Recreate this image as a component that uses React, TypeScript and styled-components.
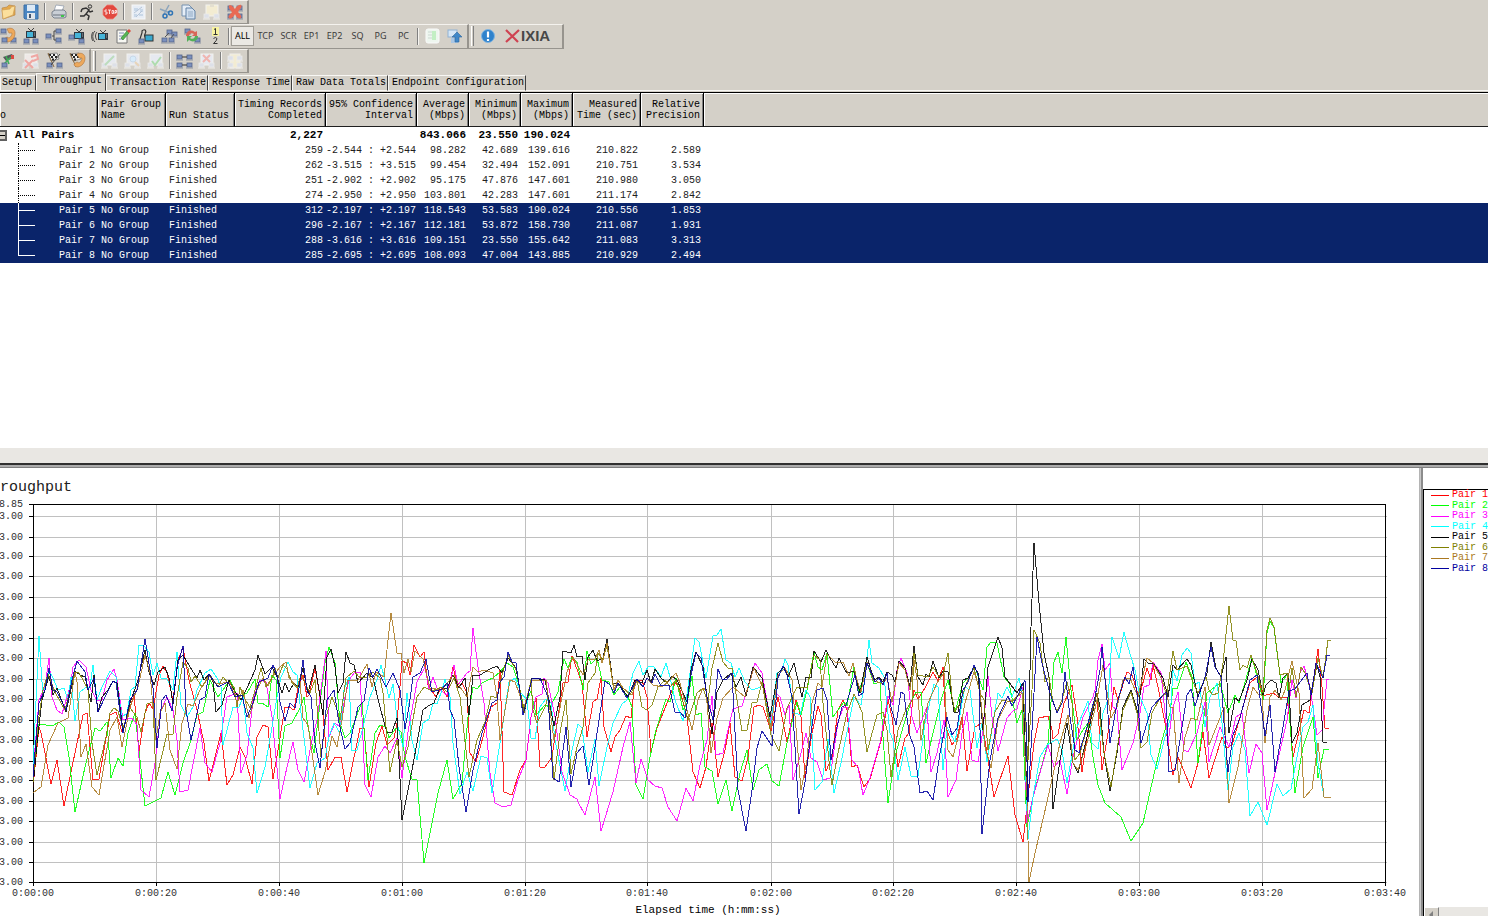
import React from "react";
import styled, { createGlobalStyle } from "styled-components";

const face = "#d4d0c8";
const shade = "#808080";
const navy = "#0a246a";
const mono = '"Liberation Mono", "DejaVu Sans Mono", monospace';

const GlobalStyle = createGlobalStyle`
  *, *::before, *::after { box-sizing: border-box; }
  body { margin: 0; background: ${face}; font-family: ${mono}; font-size: 10px; color: #000; overflow: hidden; }
  button { font: inherit; color: inherit; margin: 0; padding: 0; border: 0; background: none; }
`;

const Shell = styled.div`
  display: flex;
  flex-direction: column;
  min-height: 100vh;
  overflow: hidden;
`;

const ToolRow = styled.div<{ $h: number }>`
  display: flex;
  height: ${(p) => p.$h}px;
`;

const ToolPanel = styled.div<{ $first?: boolean }>`
  display: flex;
  align-items: center;
  padding-right: 1px;
  padding-bottom: 1px;
  margin-left: ${(p) => (p.$first ? "-4px" : "0")};
  border-top: 1px solid #f4f2ee;
  border-right: 2px solid #97948e;
  border-bottom: 1px solid #97948e;
`;

const ToolButton = styled.button`
  display: flex;
  align-items: center;
  justify-content: center;
  flex: none;
  width: 23px;
  height: 20px;
`;

const FilterButton = styled.button<{ $on?: boolean }>`
  flex: none;
  width: 23px;
  height: 20px;
  font: 9px/18px "Noto Sans", sans-serif;
  color: ${(p) => (p.$on ? "#000" : "#3c3c3c")};
  background: ${(p) => (p.$on ? "#ebe9e4" : "transparent")};
  border: 1px solid ${(p) => (p.$on ? "#a09d96" : "transparent")};
`;

const Divider = styled.span`
  flex: none;
  width: 2px;
  height: 17px;
  margin: 0 1px 0 2px;
  border-left: 1px solid ${shade};
  border-right: 1px solid #f6f4f0;
`;

const Grip = styled.span`
  flex: none;
  width: 3px;
  height: 20px;
  margin: 0 2px;
  border-left: 1px solid #fff;
  border-right: 1px solid ${shade};
`;

const Brand = styled.a`
  display: flex;
  align-items: center;
  gap: 1px;
  width: 62px;
  padding-left: 6px;
  font: bold 15px/18px "Liberation Sans", sans-serif;
  color: #484848;
  text-decoration: none;
`;

const TabBar = styled.div`
  display: flex;
  align-items: flex-end;
  height: 19px;
  padding-bottom: 1px;
`;

const Tab = styled.button<{ $on?: boolean }>`
  height: ${(p) => (p.$on ? 18 : 16)}px;
  padding: ${(p) => (p.$on ? "0 3px 3px 5px" : "0 1px 0 3px")};
  line-height: 14px;
  white-space: nowrap;
  border-top: 1px solid #f8f7f4;
  border-left: 1px solid #f8f7f4;
  border-right: 1px solid #404040;
  border-bottom: 1px solid ${(p) => (p.$on ? face : "#f8f7f4")};
  &:first-child { padding: 0 3px 0 1px; }
`;

const TabRest = styled.span`
  flex: 1;
  border-bottom: 1px solid #f8f7f4;
`;

const TablePane = styled.section`
  flex: 1;
  display: flex;
  flex-direction: column;
  background: #fff;
`;

const PairTable = styled.table`
  width: 100%;
  table-layout: fixed;
  border-collapse: separate;
  border-spacing: 0;
`;

const HeadCell = styled.th<{ $align: string }>`
  height: 35px;
  padding: 0 3px 5px;
  vertical-align: bottom;
  text-align: ${(p) => p.$align};
  font-weight: normal;
  line-height: 11px;
  white-space: pre;
  background: ${face};
  border-top: 1px solid #000;
  border-bottom: 1px solid #202020;
  border-right: 1px solid #000;
  box-shadow: inset 1px 1px #fff, inset -1px 0 ${shade};
  &:last-child { border-right: 0; box-shadow: inset 1px 1px #fff; }
  &:first-child { padding-left: 0; }
`;

const GroupRow = styled.tr`
  font-size: 11px;
  font-weight: bold;
  line-height: 16px;
`;

const PairRow = styled.tr<{ $selected: boolean }>`
  line-height: 15px;
  color: ${(p) => (p.$selected ? "#fff" : "#202020")};
  background: ${(p) => (p.$selected ? navy : "#fff")};
`;

const Cell = styled.td<{ $align?: string; $pad?: number }>`
  padding: 0 ${(p) => p.$pad ?? 3}px 0 ${(p) => (p.$align === "right" ? 0 : 3)}px;
  text-align: ${(p) => p.$align ?? "left"};
  white-space: pre;
`;

const NameCell = styled.th`
  padding: 0;
  font-weight: inherit;
  text-align: left;
`;

const NameLine = styled.div<{ $pair?: boolean }>`
  display: flex;
  align-items: center;
  justify-content: ${(p) => (p.$pair ? "space-between" : "flex-start")};
  gap: 8px;
  padding: ${(p) => (p.$pair ? "0 3px 0 18px" : "0")};
`;

const Expander = styled.button`
  width: 7px;
  height: 11px;
  border: 2px solid #606060;
  border-left: 0;
  background: linear-gradient(#000, #000) center / 100% 1px no-repeat ${face};
`;

const Branch = styled.span<{ $selected: boolean }>`
  width: 17px;
  height: 15px;
  --line: ${(p) => (p.$selected ? "1px solid #fff" : "1px dotted #000")};
`;

const BranchTop = styled.span`
  display: block;
  height: 8px;
  border-left: var(--line);
  border-bottom: var(--line);
`;

const BranchBottom = styled.span`
  display: block;
  height: 7px;
  border-left: var(--line);
`;

const ScrollTrack = styled.div`
  height: 15px;
  margin-top: auto;
  background: #e9e7e3;
`;

const RowSplitter = styled.div`
  height: 5px;
  background: #acacac;
  border-top: 2px solid #303030;
  border-bottom: 1px solid #808080;
`;

const LowerPane = styled.section`
  display: grid;
  grid-template-columns: minmax(0, 1fr) 4px 65px;
  background: #fff;
`;

const Plot = styled.svg`
  display: block;
  width: 100%;
  height: auto;
  font-family: ${mono};
  font-size: 10px;
`;

const ColumnSplitter = styled.div`
  background: #c8c8c8;
  border-left: 1px solid #b4b4b4;
  border-right: 2px solid #8c8c8c;
`;

const LegendPane = styled.aside`
  display: flex;
  flex-direction: column;
  padding-top: 21px;
  overflow: hidden;
`;

const LegendBox = styled.div`
  flex: 1;
  display: flex;
  flex-direction: column;
  border-top: 1px solid #000;
  border-left: 1px solid #000;
`;

const LegendList = styled.ul`
  display: grid;
  align-content: space-between;
  height: 84px;
  margin: 0;
  padding: 0 0 0 7px;
  list-style: none;
`;

const LegendItem = styled.li<{ $color: string }>`
  display: flex;
  align-items: center;
  gap: 3px;
  line-height: 10px;
  white-space: pre;
  color: ${(p) => p.$color};
  &::before { content: ""; flex: none; width: 18px; border-top: 1px solid ${(p) => p.$color}; }
`;

const LegendScroll = styled.div`
  height: 9px;
  margin-top: auto;
  background: #e9e7e3;
  overflow: hidden;
`;

const ScrollButton = styled.button`
  display: block;
  width: 15px;
  height: 15px;
  background: ${face};
  border: 1px solid ${shade};
  border-top-color: #fff;
  border-left-color: #fff;
`;

/* ---------- toolbar icons ---------- */

const Svg = ({ children }: { children: React.ReactNode }) => (
  <svg width="18" height="18" viewBox="0 0 18 18" aria-hidden="true">{children}</svg>
);

const Host = ({ x, y, pale }: { x: number; y: number; pale?: boolean }) => (
  <g>
    <rect x={x} y={y} width="5" height="4" fill={pale ? "#dde0e8" : "#7b90bd"} stroke={pale ? "#eceae8" : "#56658c"} strokeWidth=".8" />
    <path d={`M${x - 1} ${y + 5}h7`} stroke={pale ? "#eeedea" : "#8d95a4"} />
  </g>
);

const Monitor = ({ x, y }: { x: number; y: number }) => (
  <g>
    <rect x={x} y={y} width="10" height="7" fill="#303840" />
    <rect x={x + 1} y={y + 1} width="6" height="5" fill="#45b4d8" />
    <path d={`M${x + 8} ${y + 2}h1M${x + 8} ${y + 4}h1`} stroke="#b8c0c8" strokeWidth=".8" />
    <path d={`M${x + 2} ${y - 3}l3 3l3-3`} fill="none" stroke="#404040" />
  </g>
);

const Handset = ({ x = 0 }: { x?: number }) => (
  <path transform={`translate(${x} 0)`} d="M5 2c4-2 8 0 8 4c0 5-3 8-7 9c-2 0-4-1-4-3l3-2l2 1c2-1 3-3 3-5l-3 0z" fill="#eda95c" stroke="#b0763a" strokeWidth=".6" />
);

const Flag = ({ x = 3 }: { x?: number }) => (
  <g transform={`translate(${x} 1)`}>
    <path d="M0 1l9-1l2 6l-8 2z" fill="#f4f4f2" stroke="#555" strokeWidth=".6" />
    <path d="M1 1h2v2h-2zM5 1h2v2h-2zM3 3h2v2h-2zM7 3h2v2h-2zM4 5.500h2v2h-2z" fill="#222" />
    <path d="M0 0l6 14" stroke="#8a6a40" />
  </g>
);

const PaleSheet = ({ fill = "#e6e9f0" }: { fill?: string }) => (
  <g>
    <rect x="3" y="2" width="12" height="11" fill={fill} stroke="#f2f1ee" />
    <Host x={1} y={11} pale />
    <Host x={11} y={11} pale />
  </g>
);

const icons: Record<string, React.ReactNode> = {
  open: <Svg><path d="M3 5l5-1l2-2l6 1v9l-12 4z" fill="#e5a94a" stroke="#b98a4c" strokeWidth=".7" /><path d="M3 7l8-1l1-2l4-1l-2 9l-10 4z" fill="#fbdf9c" stroke="#cf9d55" strokeWidth=".7" /></Svg>,
  save: <Svg><path d="M2 2h14v14h-13l-1-1z" fill="#4a86c2" stroke="#3a6ea4" /><rect x="5" y="2" width="8" height="6" fill="#dce9f5" /><rect x="5" y="10" width="8" height="6" fill="#dfe6ec" /><rect x="7" y="11" width="2" height="4" fill="#44546c" /></Svg>,
  print: <Svg><path d="M6 2l8 1l-2 5h-8z" fill="#fff" stroke="#8a97a8" strokeWidth=".7" /><path d="M2 9l3-2h9l2 2v5l-2 1h-10l-2-2z" fill="#c9cfd6" stroke="#66707c" strokeWidth=".8" /><path d="M3 12h12" stroke="#6a737d" /><rect x="11" y="12" width="3" height="2" fill="#3fc34b" /></Svg>,
  run: <Svg><circle cx="12" cy="3.500" r="1.700" fill="none" stroke="#333" /><path d="M4 6l4-1l3 2l-3 4l3 2l-1 4M8 11l-2 2h-4M10 7l2 2l3-1M4 6l-1 3" fill="none" stroke="#333" strokeWidth="1.500" /></Svg>,
  stop: <Svg><path d="M6 2h6l4 4v6l-4 4h-6l-4-4v-6z" fill="#e2493f" stroke="#ef8279" strokeWidth=".8" /><path d="M6 7h-2v2h2v2h-2M7 7h3M8.500 7v4M11 7.500h1.500v3h-1.500zM14 11v-3.500h1.500v2h-1.500" fill="none" stroke="#fff" strokeWidth=".8" /></Svg>,
  sheet: <Svg><rect x="3" y="2" width="13" height="14" fill="#e7edf5" stroke="#f7f7f7" /><path d="M5 5h4v3h-4zM11 6h3v3h-3zM5 11h3v3h-3zM10 11h4v2h-4z" fill="#c9d8e8" /><path d="M5 10l8-6M7 14l6-6" stroke="#b5c4d8" /></Svg>,
  cut: <Svg><path d="M3 6l10 4M12 2l-5 9" stroke="#8ba4bc" strokeWidth="1.500" /><circle cx="13.500" cy="10" r="2" fill="none" stroke="#2f74b5" strokeWidth="1.500" /><circle cx="8" cy="13" r="2" fill="none" stroke="#2f74b5" strokeWidth="1.500" /></Svg>,
  copy: <Svg><path d="M2 2h7l3 3v8h-10z" fill="#e6eef7" stroke="#7792b0" /><path d="M6 5h6l3 3v8h-9z" fill="#d2e0ef" stroke="#6382a5" /><path d="M8 9h5M8 11h5M8 13h5" stroke="#93abc5" /></Svg>,
  paste: <Svg><PaleSheet fill="#f3ecd2" /><rect x="7" y="1" width="4" height="3" fill="#e3dfd0" /></Svg>,
  remove: <Svg><Host x={2} y={3} /><Host x={11} y={3} /><Host x={2} y={11} /><Host x={11} y={11} /><path d="M4 2c2 0 4 3 5 4c1-2 4-5 6-4c2 2-2 5-3 7c2 2 4 4 3 6c-3 2-5-2-6-4c-1 2-4 6-6 4c-2-2 2-4 3-6c-2-2-5-6-2-7z" fill="#e86a54" /></Svg>,
  voip: <Svg><Host x={2} y={2} /><Host x={12} y={11} /><Handset x={3} /><Host x={3} y={11} /></Svg>,
  video: <Svg><Monitor x={4} y={4} /><Host x={2} y={12} /><Host x={11} y={12} /></Svg>,
  multi: <Svg><Host x={1} y={7} /><Host x={11} y={2} /><Host x={11} y={11} /><path d="M7 9h2M9 4v9M9 4h2M9 13h2" fill="none" stroke="#444" /></Svg>,
  vidPair: <Svg><Monitor x={6} y={5} /><Host x={1} y={8} /><Host x={11} y={12} /></Svg>,
  cast: <Svg><Monitor x={7} y={6} /><path d="M6 5c-2 2-2 6 0 8M4 4c-3 3-3 8 0 11M2 5c-2 3-2 6 0 9" fill="none" stroke="#444" /></Svg>,
  edit: <Svg><path d="M3 3h10v13h-10z" fill="#f7f7f2" stroke="#777" /><path d="M5 6h5M5 9h5M5 12h4" stroke="#8290b8" /><path d="M7 11l6-7l2 2l-6 7z" fill="#57b554" stroke="#2e7d32" strokeWidth=".6" /><path d="M13 4l2-2l2 2l-2 2z" fill="#d94a3e" /></Svg>,
  replay: <Svg><path d="M3 15c-1-5 3-8 2-11c3-3 5 0 3 3c-1 2 0 4 2 3" fill="none" stroke="#333" strokeWidth="1.200" /><rect x="8" y="8" width="8" height="6" fill="#39a9cf" stroke="#333" /><Host x={2} y={12} /></Svg>,
  clone: <Svg><Host x={7} y={3} /><Host x={12} y={5} /><Host x={2} y={11} /><Host x={9} y={11} /><path d="M5 10l4-4M11 11l3-4" stroke="#555" /></Svg>,
  swap: <Svg><Host x={2} y={2} /><Host x={12} y={11} /><path d="M3 9c0-5 5-7 9-4l2-1v5h-5l2-2c-3-2-5 0-5 3z" fill="#d86658" /><path d="M15 9c0 5-5 7-9 4l-2 2v-6h5l-2 2c3 2 5 0 5-2z" fill="#53b05a" /></Svg>,
  order: <Svg><rect x="6" y="0" width="7" height="9" fill="#f8f3a0" /><path d="M8 2.500l1.500-1v6M7.500 7.500h4M7.500 11.500q2-2 3.500 0q0 2-3.500 5h4" fill="none" stroke="#333" /></Svg>,
  paleList: <Svg><rect x="3" y="2" width="13" height="14" rx="2" fill="#eef6ef" stroke="#fafafa" /><path d="M5 5h4M5 8h4M5 11h4" stroke="#cbd8d2" /><path d="M9 4h4v9h-4z" fill="#c3efc4" /></Svg>,
  upload: <Svg><rect x="2" y="3" width="9" height="7" fill="#d5e6f6" stroke="#8fb1d3" /><path d="M5 11h7v5h-7z" fill="#a9c6e4" /><path d="M11 5l5 5h-3v5h-4v-5h-3z" fill="#3f87c8" stroke="#2c679d" strokeWidth=".6" /></Svg>,
  info: <Svg><circle cx="9" cy="9" r="6.500" fill="#2f82cc" stroke="#7fb4e2" /><path d="M9 4.500v6" stroke="#fff" strokeWidth="2.200" /><path d="M9 12v2" stroke="#fff" strokeWidth="2.200" /></Svg>,
  flagPair: <Svg><path d="M4 5l9-3l2 4l-8 3z" fill="#55585c" /><path d="M7 4l3 8M4 13l8-8" stroke="#3fae58" strokeWidth="1.500" /><path d="M12 3h3v4h-3z" fill="#db4a42" /><Host x={3} y={11} /></Svg>,
  flagOff: <Svg><PaleSheet fill="#efe9e7" /><path d="M3 8l8 8M11 8l-8 8M9 5l6-2l1 4l-5 2" fill="none" stroke="#efa6a2" strokeWidth="2" /></Svg>,
  flagHost: <Svg><Flag /><Host x={2} y={11} /><Host x={12} y={11} /><path d="M15 2l-9 11" stroke="#444" /></Svg>,
  flagCall: <Svg><Flag x={2} /><Handset x={4} /></Svg>,
  paleEdit: <Svg><PaleSheet /><path d="M4 13l9-9" stroke="#bcdcbd" strokeWidth="2" /></Svg>,
  paleFind: <Svg><PaleSheet /><circle cx="9" cy="7" r="3" fill="#d7ebfa" stroke="#c8d9e8" /><path d="M11 10l4 4" stroke="#e8d4b8" strokeWidth="2" /></Svg>,
  paleCheck: <Svg><PaleSheet /><path d="M5 9l3 4l6-8" fill="none" stroke="#aedcae" strokeWidth="2" /></Svg>,
  links: <Svg><Host x={2} y={3} /><Host x={12} y={3} /><Host x={2} y={11} /><Host x={12} y={11} /><path d="M7 5h5M7 13h5" stroke="#333" /></Svg>,
  paleRemove: <Svg><PaleSheet /><path d="M5 3l7 7M12 3l-7 7" stroke="#f0b5b0" strokeWidth="2" /></Svg>,
  palePaste: <Svg><rect x="4" y="2" width="10" height="14" fill="#f3ecd2" stroke="#efeeea" /><Host x={2} y={4} pale /><Host x={11} y={4} pale /><Host x={2} y={11} pale /><Host x={11} y={11} pale /></Svg>,
};

const Tools = ({ items }: { items: string[] }) => (
  <>
    {items.map((name, i) =>
      name === "|" ? <Divider key={i} /> : <ToolButton key={i} type="button" aria-label={name}>{icons[name]}</ToolButton>
    )}
  </>
);

/* ---------- table data ---------- */

const columns = [
  { label: "o", width: 98, align: "left" },
  { label: "Pair Group\nName", width: 68, align: "left" },
  { label: "Run Status", width: 69, align: "left" },
  { label: "Timing Records\nCompleted", width: 91, align: "right" },
  { label: "95% Confidence\nInterval", width: 91, align: "right" },
  { label: "Average\n(Mbps)", width: 52, align: "right" },
  { label: "Minimum\n(Mbps)", width: 52, align: "right" },
  { label: "Maximum\n(Mbps)", width: 52, align: "right" },
  { label: "Measured\nTime (sec)", width: 68, align: "right" },
  { label: "Relative\nPrecision", width: 63, align: "right" },
];

const pairs = [
  ["Pair 1", "259", "-2.544 : +2.544", "98.282", "42.689", "139.616", "210.822", "2.589"],
  ["Pair 2", "262", "-3.515 : +3.515", "99.454", "32.494", "152.091", "210.751", "3.534"],
  ["Pair 3", "251", "-2.902 : +2.902", "95.175", "47.876", "147.601", "210.980", "3.050"],
  ["Pair 4", "274", "-2.950 : +2.950", "103.801", "42.283", "147.601", "211.174", "2.842"],
  ["Pair 5", "312", "-2.197 : +2.197", "118.543", "53.583", "190.024", "210.556", "1.853"],
  ["Pair 6", "296", "-2.167 : +2.167", "112.181", "53.872", "158.730", "211.087", "1.931"],
  ["Pair 7", "288", "-3.616 : +3.616", "109.151", "23.550", "155.642", "211.083", "3.313"],
  ["Pair 8", "285", "-2.695 : +2.695", "108.093", "47.004", "143.885", "210.929", "2.494"],
];

/* ---------- chart data ---------- */

/* Each trace is kept in five time windows; samples are thirds of a plot unit from the window origin. */
const origins = [[30, 132], [300, 132], [570, 132], [840, 62], [1090, 122]];

const traces: { name: string; color: string; windows: string[] }[] = [
  {
    name: "Pair 1", color: "#ff0000", windows: [
      "10,560 28,380 33,400 62,552 82,480 103,618 125,500 160,345 172,340 188,540 208,536 240,345 258,337 275,395 290,350 312,285 328,452 345,340 358,310 370,328 388,225 399,198 410,220 430,300 445,180 458,145 478,240 500,330 522,430 536,543 573,400 590,555 608,525 630,440 645,470 665,552 682,410 700,375 715,380 730,538 745,450 765,322 778,322 793,330 805,260 818,225 832,290",
      "26,285 45,205 55,255 68,345 85,510 105,470 122,470 140,577 180,385 192,387 208,562 228,430 245,377 262,435 282,415 292,370 306,182 320,190 330,225 341,136 360,172 373,155 385,255 408,290 425,262 440,290 460,200 473,262 485,250 500,280 510,460 528,487 550,410 572,320 590,310 600,210 613,577 635,586 660,510 678,480 692,350 708,295 721,500 735,500 755,470 790,248 803,245 815,168 835,215",
      "37,250 50,410 68,305 82,298 93,235 103,380 122,455 135,412 150,390 167,348 182,355 195,240 215,240 232,290 244,455 262,385 290,310 315,245 330,270 350,350 370,515 389,563 408,500 425,370 444,530 465,450 480,370 495,530 515,542 535,470 552,320 567,315 580,322 604,392 625,290 650,425 678,300 692,350 706,535 725,400 743,318 753,345 769,512 785,470 803,330 820,300 832,330",
      "35,710 52,705 73,770 90,748 125,620 145,508 155,560 173,710 195,625 207,610 222,480 235,508 255,475 280,425 295,452 308,410 318,590 335,645 350,625 366,560 380,722 405,590 425,580 440,670 463,800 505,678 525,855 548,937 565,800 582,640 597,565 625,557 635,600 640,628 655,612 672,520 697,465 710,560 726,725 745,600 768,490",
      "22,320 37,540 55,430 72,290 85,330 110,245 125,255 147,320 170,235 182,270 190,225 205,290 225,400 248,555 265,500 304,595 325,520 340,425 358,563 395,440 410,475 425,465 450,380 480,280 500,262 520,318 550,308 570,325 590,320 600,400 610,500 643,360 657,370 683,178 697,290 705,415 717,415",
    ],
  },
  {
    name: "Pair 2", color: "#00ff00", windows: [
      "10,540 28,372 65,377 88,365 102,380 118,470 134,636 165,500 195,385 210,393 230,365 242,535 263,473 279,498 295,400 315,340 330,480 345,619 394,595 415,515 436,586 460,490 482,420 500,345 520,337 540,240 565,290 600,240 625,290 650,280 675,237 685,310 697,310 713,322 725,225 738,240 750,475 766,377 785,368 810,325",
      "13,290 25,380 42,458 55,360 75,190 86,142 105,190 120,370 135,413 150,400 185,305 205,540 225,400 240,375 258,382 268,415 288,385 303,395 315,470 335,537 352,540 373,790 415,580 441,480 459,597 485,550 505,350 520,260 532,268 545,248 565,240 580,235 600,215 620,190 640,200 655,245 672,325 692,272 708,345 735,315 750,322 775,275 792,178 803,205 815,170 830,185",
      "38,270 50,153 62,192 80,175 95,240 118,245 133,285 150,262 175,290 185,320 197,555 218,598 240,470 258,390 288,298 300,305 318,235 340,330 352,310 367,228 378,345 392,340 405,500 425,512 444,612 467,540 487,633 510,520 532,450 550,570 568,510 590,493 605,543 626,558 650,430 680,305 692,345 710,270 733,157 745,200 757,210 770,160 790,352 810,320 822,305",
      "22,528 42,410 58,490 82,400 103,462 120,455 130,620 144,820 165,680 190,590 212,515 228,485 243,485 257,700 280,610 305,500 325,450 345,545 370,460 385,445 405,410 430,480 440,350 452,335 472,340 492,440 508,460 532,580 545,540 560,890 580,800 625,640 642,395 653,365 665,430 677,320 695,510 712,630 730,600 745,580",
      "10,500 25,585 45,640 92,680 122,753 158,700 185,580 215,450 240,370 250,295 262,298 288,215 305,260 325,520 350,310 375,292 390,280 415,370 435,315 448,340 485,205 505,270 518,330 532,130 541,92 552,115 573,280 590,255 600,400 614,610 640,470 668,380 683,565 703,478 717,478",
    ],
  },
  {
    name: "Pair 3", color: "#ff00ff", windows: [
      "10,520 28,300 45,260 56,175 66,290 80,330 95,342 120,260 130,200 147,180 168,200 183,270 200,300 215,300 232,240 251,206 262,240 279,360 305,353 320,375 334,570 356,590 375,490 392,330 410,290 430,330 440,420 451,577 474,570 510,385 525,490 545,517 570,430 590,290 620,280 632,518 650,465 668,300 690,240 708,245 725,350 749,597 770,500 790,425 805,510",
      "13,546 35,420 50,360 78,152 88,410 105,370 120,380 135,290 148,240 165,215 180,215 194,555 213,592 235,470 255,437 270,460 290,415 306,535 325,395 350,245 376,200 388,268 398,232 412,265 440,285 461,196 475,255 500,220 510,212 520,85 535,200 553,310 570,520 585,610 608,621 633,615 655,540 678,480 692,350 708,292 725,282 733,235 745,250 765,350 785,515 810,586 830,597",
      "22,600 44,645 74,530 94,694 128,575 160,440 179,366 197,550 214,478 235,540 255,558 275,565 295,620 321,663 347,565 370,603 390,495 410,420 427,288 438,465 458,458 475,390 490,328 515,318 535,262 555,188 575,220 603,370 615,275 630,290 645,345 658,315 670,540 690,470 709,398 722,475 742,485 760,540 780,535 803,365 818,325 830,320",
      "35,690 53,710 70,795 90,745 120,640 145,498 158,525 170,420 182,385 200,430 215,560 230,608 245,570 260,530 273,725 290,670 312,570 324,800 348,750 365,610 382,545 395,690 415,695 430,600 445,437 455,560 475,662 500,565 518,542 532,538 548,470 560,880 580,800 625,645 642,712 660,690 680,792 700,680 730,560 758,500",
      "15,300 25,210 35,162 45,240 60,218 68,350 82,360 96,540 130,460 150,370 163,292 178,285 188,215 213,250 235,460 250,350 265,305 282,480 295,487 320,430 345,335 358,515 390,410 418,470 438,380 455,370 478,550 497,462 515,490 532,660 555,550 590,390 605,270 618,325 630,250 643,228 660,290 680,435 697,420 710,267 718,267",
    ],
  },
  {
    name: "Pair 4", color: "#00ffff", windows: [
      "10,500 28,108 40,290 56,212 70,235 85,270 102,265 115,300 122,230 136,362 150,275 165,265 180,262 190,195 200,300 215,260 240,212 258,230 275,350 290,340 303,270 315,262 328,135 342,138 358,155 370,225 380,190 393,235 412,238 430,270 441,156 453,315 472,352 490,320 500,270 525,220 543,208 560,235 572,260 578,435 608,320 628,322 640,290 652,400 668,445 682,580 705,500 725,380 740,290 752,230 775,185 790,215 800,225 812,340",
      "31,565 50,490 75,475 88,410 103,370 120,400 133,270 147,230 157,453 172,450 190,380 210,290 230,240 243,195 255,240 268,293 280,252 295,380 310,440 322,280 335,420 350,480 368,370 388,357 400,310 410,312 425,270 435,237 450,290 460,430 480,582 500,515 518,572 543,467 560,475 576,580 600,430 628,245 645,235 662,280 682,300 692,415 706,418 720,320 737,298 752,310 765,420 795,572 815,450 835,372",
      "37,385 54,515 75,418 88,558 110,440 130,370 155,312 172,300 190,220 206,182 218,225 235,200 250,198 262,212 273,230 287,188 300,232 315,300 340,362 357,240 375,115 388,125 408,235 430,108 441,105 452,88 467,180 483,188 495,232 506,205 525,245 545,270 565,265 580,255 604,375 620,220 635,210 644,178 655,195 670,335 690,345 708,270 720,290 735,570 755,545 775,418 792,578 812,490",
      "22,605 42,500 62,525 75,440 86,330 97,400 118,415 133,440 150,610 160,630 175,750 195,650 212,738 235,738 255,580 282,462 293,470 308,720 322,590 345,635 375,470 390,480 410,655 425,580 440,695 465,540 475,490 485,505 500,472 515,500 538,445 550,500 565,928 580,800 600,680 620,645 650,628 665,660 680,760 710,590 745,512",
      "5,460 25,478 40,370 55,330 67,140 88,205 101,125 115,170 135,240 150,320 170,370 183,495 200,538 225,440 240,390 250,240 260,272 275,195 292,175 303,190 315,285 328,275 345,410 360,320 382,280 395,400 413,600 430,470 448,428 465,480 480,677 505,637 532,705 560,582 580,617 603,597 620,500 640,410 655,395 670,345 685,520 703,620",
    ],
  },
  {
    name: "Pair 5", color: "#000000", windows: [
      "10,560 20,430 35,300 56,228 68,285 80,265 108,335 134,212 150,225 165,230 182,305 192,225 203,335 215,290 235,270 250,243 260,250 280,392 300,310 325,240 345,150 358,215 372,255 385,215 405,202 418,235 428,312 445,180 458,165 480,200 500,235 510,210 522,240 538,222 550,245 558,335 575,315 598,240 615,275 632,300 650,265 675,210 684,165 705,222 725,200 740,230 755,280 766,248 778,275 792,248 805,262",
      "8,205 25,280 45,195 68,345 80,170 92,148 105,200 115,278 128,250 139,155 150,190 163,195 175,248 200,218 220,235 240,320 262,398 275,395 290,355 305,660 335,510 368,330 385,318 402,310 418,270 440,265 460,225 478,265 495,235 507,345 520,225 540,225 570,208 590,198 605,220 625,175 648,205 672,340 695,235 735,240 762,378 780,290 790,152 812,158 821,135 832,170",
      "36,168 45,240 55,170 68,150 80,182 98,175 112,118 130,250 145,250 175,290 195,240 215,250 232,210 243,250 256,208 272,235 292,250 305,228 322,240 350,305 362,210 377,155 398,200 425,402 440,275 460,240 483,218 498,262 512,232 527,288 550,200 575,235 600,350 625,220 642,200 655,230 671,190 695,292 708,230 722,235 733,152 752,185 767,150 780,175 797,205 808,175 825,210",
      "22,430 42,422 60,490 82,380 95,430 105,450 118,440 130,455 142,425 155,435 165,455 176,392 195,415 210,470 223,348 235,440 248,465 258,432 268,440 280,392 298,445 310,422 325,425 342,547 355,547 370,450 385,445 403,412 415,430 428,600 443,410 475,322 485,355 495,440 532,488 548,460 560,810 572,290 583,38 598,220 612,370 628,440 640,838 660,690 682,578 700,700 714,730 740,620",
      "20,310 30,350 42,490 61,603 80,490 98,350 122,300 145,370 163,207 178,222 190,220 220,265 235,320 248,225 260,240 290,207 303,225 325,320 350,250 363,155 378,235 392,260 408,200 418,430 435,325 448,332 470,270 485,207 505,240 518,315 528,285 542,270 557,280 568,325 580,265 595,250 606,460 622,430 635,345 660,330 680,225 690,260 699,455 712,455",
    ],
  },
  {
    name: "Pair 6", color: "#808000", windows: [
      "10,545 25,370 40,270 55,222 75,275 105,330 120,270 134,215 148,218 160,240 175,270 185,430 202,525 228,410 240,340 252,325 265,332 280,385 300,325 320,350 333,395 350,313 368,307 378,540 395,465 412,402 430,402 440,290 458,185 475,205 483,245 495,228 515,262 540,225 565,262 579,230 595,250 612,262 620,320 629,262 642,290 660,325 680,250 693,205 708,260 725,235 735,205 745,235 760,195 772,208 785,250 800,265",
      "3,225 30,280 45,240 62,470 78,350 97,290 110,330 120,360 137,235 162,212 180,235 200,232 220,215 240,235 250,280 270,515 290,420 306,500 325,440 352,290 372,260 395,272 425,262 440,275 461,235 480,290 508,530 530,420 555,365 572,288 590,295 605,225 625,165 650,215 672,340 693,240 700,330 710,368 735,320 745,290 762,540 780,400 797,300 812,522 830,440",
      "40,380 55,250 75,220 85,160 98,180 112,135 130,255 150,255 180,285 200,240 216,322 232,330 245,315 265,262 285,240 300,262 318,240 340,305 355,360 380,280 398,265 415,305 425,205 445,128 460,185 475,205 485,205 500,300 515,392 532,390 547,308 560,305 575,245 603,405 628,452 650,325 680,262 710,265 733,165 750,180 760,310 780,510 787,555 805,460",
      "20,550 42,492 65,545 82,667 110,555 128,545 140,600 153,740 175,600 195,545 215,510 222,370 235,435 265,440 280,410 298,440 310,435 323,370 335,500 345,545 360,520 380,455 403,415 420,490 432,510 445,660 465,545 485,510 515,515 548,480 565,690 575,480 583,300 600,340 615,455 628,440 640,515 652,545 665,510 680,455 695,520 705,690 720,670",
      "20,310 42,490 62,590 80,480 98,360 122,305 140,370 153,475 170,455 187,370 210,325 230,310 249,182 262,240 290,228 305,270 325,310 348,262 358,300 370,315 385,310 400,220 417,48 430,150 438,152 450,240 460,225 472,235 482,195 500,250 518,310 530,120 541,83 552,110 570,255 590,250 598,300 605,235 618,320 632,230 645,250 665,310 683,205 700,265 713,151 722,151",
    ],
  },
  {
    name: "Pair 7", color: "#aa7820", windows: [
      "10,580 32,562 55,435 85,370 115,355 134,215 142,245 152,472 168,432 185,560 206,584 240,390 262,350 277,442 300,320 325,260 345,165 360,220 378,420 390,340 405,310 420,450 440,508 455,370 475,312 490,318 510,270 538,225 555,250 580,250 600,245 620,310 640,270 658,355 680,270 700,235 713,258 725,230 750,200 769,187 778,235 800,260 810,245",
      "10,355 25,375 54,586 75,515 97,408 110,440 125,360 145,240 175,240 201,193 215,262 228,215 252,230 273,38 290,160 303,160 313,220 324,178 333,215 345,152 370,178 390,265 425,270 440,250 461,225 480,262 500,290 518,200 535,215 552,210 578,220 590,290 600,420 630,240 645,245 672,320 695,240 738,240 762,420 785,290 800,215 820,172",
      "38,225 55,180 75,178 88,150 97,190 112,130 133,270 145,240 160,265 185,285 200,240 218,262 232,235 248,255 275,262 300,240 317,218 330,250 350,330 367,390 385,300 398,265 408,270 422,460 440,355 460,295 490,262 525,290 552,205 580,265 603,385 625,225 645,205 665,240 680,420 692,570 710,480 725,310 743,250 757,262 770,162 795,185 820,185",
      "28,438 39,398 50,450 62,485 82,395 100,450 125,462 140,445 155,515 178,400 195,420 210,480 223,390 232,450 242,630 265,520 290,460 312,430 323,660 338,680 360,600 375,520 403,425 420,480 435,650 453,715 475,570 500,515 520,510 545,490 560,800 566,1055 585,970 620,815 660,640 685,555 700,700 714,720 740,640",
      "20,330 38,225 62,385 80,350 100,270 120,265 145,320 170,203 190,220 215,270 240,350 250,350 266,580 285,440 304,385 320,390 345,290 358,465 385,400 402,350 418,640 445,530 470,360 488,292 503,313 515,315 526,460 540,320 555,300 572,330 585,300 605,212 628,310 643,625 665,597 685,460 703,622 722,622",
    ],
  },
  {
    name: "Pair 8", color: "#0000a0", windows: [
      "10,530 28,310 45,270 56,205 68,270 80,275 108,330 125,240 142,184 165,215 175,270 192,235 203,335 225,290 250,243 258,250 280,398 300,300 322,270 345,118 368,265 380,445 395,300 407,285 425,332 440,200 458,138 468,330 482,420 510,300 525,290 538,222 565,260 595,245 615,290 635,285 652,350 670,310 688,245 715,235 728,195 742,225 750,305 764,362 780,310 795,325 808,265",
      "8,180 22,270 32,290 45,430 60,505 82,300 103,270 118,370 135,446 150,430 175,320 192,302 206,205 220,230 230,208 258,262 278,218 300,270 314,388 328,320 340,230 360,218 378,178 395,275 425,268 440,248 450,330 463,358 478,500 499,635 520,510 545,400 575,310 590,300 600,245 612,230 624,155 635,185 648,190 670,345 695,238 720,235 735,270 745,290 760,535 777,546 797,380 812,560 830,460",
      "38,438 56,555 75,440 95,300 106,242 120,255 132,280 145,250 170,295 200,238 218,262 232,235 245,248 256,222 273,258 298,255 315,335 330,335 345,355 362,225 377,160 392,175 410,290 428,360 443,208 455,238 468,240 485,218 505,570 527,692 545,570 560,445 575,393 605,438 625,235 638,198 650,225 665,290 686,643 705,545 722,400 742,270 758,265 770,300 783,480 800,380 815,320",
      "18,525 45,435 58,498 70,490 82,400 105,455 118,445 130,465 142,430 152,530 167,585 182,487 193,492 207,610 222,650 240,788 262,783 280,810 300,670 320,560 335,615 350,595 370,480 385,455 403,405 417,440 427,912 450,690 475,565 503,498 515,528 530,500 555,450 565,815 575,600 590,320 605,400 628,480 650,548 665,520 674,425 690,560 705,660 717,670 740,590",
      "15,320 30,240 37,172 50,330 61,458 80,340 105,262 117,282 130,232 140,310 152,458 170,400 187,350 228,305 236,547 255,540 270,450 290,315 302,298 315,348 345,260 363,170 375,230 392,260 402,400 413,545 430,435 450,385 480,270 500,255 525,438 540,345 555,545 580,410 598,302 615,298 650,250 662,315 678,220 700,265 712,196 720,196",
    ],
  },
];

const toPoints = (windows: string[]) =>
  windows
    .flatMap((w, i) =>
      w.split(" ").map((pair) => {
        const [x, y] = pair.split(",").map(Number);
        return `${Math.round(origins[i][0] + x / 3)},${Math.round(origins[i][1] + y / 3)}`;
      })
    )
    .join(" ");

const yLines = [48, 69, 88, 108, 129, 149, 170, 190, 211, 231, 252, 272, 293, 312, 333, 353, 374, 394, 414];
const xTicks = [33, 156, 279, 402, 525, 647, 771, 893, 1016, 1139, 1262, 1385];
const xLabels = ["0:00:00", "0:00:20", "0:00:40", "0:01:00", "0:01:20", "0:01:40", "0:02:00", "0:02:20", "0:02:40", "0:03:00", "0:03:20", "0:03:40"];

const ThroughputPlot = () => (
  <Plot viewBox="0 0 1419 448" role="img" aria-label="Throughput over elapsed time">
    <text x="0" y="23" fontSize="15" fill="#202020">roughput</text>
    <g stroke="#c0c0c0" shapeRendering="crispEdges">
      {yLines.map((y) => <path key={y} d={`M33 ${y}H1387`} />)}
      {xTicks.slice(1, -1).map((x) => <path key={x} d={`M${x} 36V414`} />)}
    </g>
    <g stroke="#000" fill="none" shapeRendering="crispEdges">
      <path d="M29 36H1386M33 36V418M1385 36V418M29 414H1386" />
      {yLines.map((y) => <path key={y} d={`M29 ${y}H33`} />)}
      {xTicks.map((x) => <path key={x} d={`M${x} 414V418`} />)}
    </g>
    <g fill="#303030">
      <text x="23" y="39" textAnchor="end">8.85</text>
      {yLines.map((y) => <text key={y} x="23" y={y + 3} textAnchor="end">3.00</text>)}
      {xTicks.map((x, i) => <text key={x} x={x} y="428" textAnchor="middle">{xLabels[i]}</text>)}
    </g>
    <text x="708" y="445" textAnchor="middle" fontSize="11">Elapsed time (h:mm:ss)</text>
    <g fill="none" shapeRendering="crispEdges" strokeOpacity=".85">
      {traces.map((t) => <polyline key={t.name} points={toPoints(t.windows)} stroke={t.color} />)}
    </g>
  </Plot>
);

export default function App() {
  return (
    <Shell>
      <GlobalStyle />
      <header>
        <ToolRow $h={24}>
          <ToolPanel $first>
            <Tools items={["open", "save", "|", "print", "|", "run", "stop", "|", "sheet", "|", "cut", "copy", "paste", "remove"]} />
          </ToolPanel>
        </ToolRow>
        <ToolRow $h={25}>
          <ToolPanel $first>
            <Tools items={["voip", "video", "multi", "vidPair", "cast", "edit", "replay", "clone", "swap", "order", "|"]} />
            {["ALL", "TCP", "SCR", "EP1", "EP2", "SQ", "PG", "PC"].map((f) => (
              <FilterButton key={f} type="button" $on={f === "ALL"}>{f}</FilterButton>
            ))}
            <Tools items={["|", "paleList", "upload"]} />
          </ToolPanel>
          <ToolPanel>
            <Grip />
            <Tools items={["info"]} />
            <Brand href="#ixia">
              <svg width="15" height="14" viewBox="0 0 15 14" aria-hidden="true">
                <path d="M1 1L13 13M14 1L1 13" stroke="#cf4352" strokeWidth="2.200" />
              </svg>
              IXIA
            </Brand>
          </ToolPanel>
        </ToolRow>
        <ToolRow $h={24}>
          <ToolPanel $first>
            <Tools items={["flagPair", "flagOff", "flagHost", "flagCall"]} />
          </ToolPanel>
          <ToolPanel>
            <Grip />
            <Tools items={["paleEdit", "paleFind", "paleCheck", "|", "links", "paleRemove", "|", "palePaste"]} />
          </ToolPanel>
        </ToolRow>
        <TabBar role="tablist">
          {["Setup", "Throughput", "Transaction Rate", "Response Time", "Raw Data Totals", "Endpoint Configuration"].map((t) => (
            <Tab key={t} type="button" role="tab" aria-selected={t === "Throughput"} $on={t === "Throughput"}>{t}</Tab>
          ))}
          <TabRest />
        </TabBar>
      </header>

      <TablePane>
        <PairTable>
          <colgroup>
            {columns.map((c) => <col key={c.label} width={c.width} />)}
            <col />
          </colgroup>
          <thead>
            <tr>
              {columns.map((c) => <HeadCell key={c.label} scope="col" $align={c.align}>{c.label}</HeadCell>)}
              <HeadCell $align="left" />
            </tr>
          </thead>
          <tbody>
            <GroupRow>
              <NameCell scope="row">
                <NameLine><Expander type="button" aria-label="Collapse" />All Pairs</NameLine>
              </NameCell>
              <Cell /><Cell />
              <Cell $align="right">2,227</Cell>
              <Cell />
              <Cell $align="right">843.066</Cell>
              <Cell $align="right">23.550</Cell>
              <Cell $align="right">190.024</Cell>
              <Cell /><Cell /><Cell />
            </GroupRow>
            {pairs.map(([name, ...values], i) => {
              const selected = i > 3;
              return (
                <PairRow key={name} $selected={selected}>
                  <NameCell scope="row">
                    <NameLine $pair>
                      <Branch $selected={selected}>
                        <BranchTop />
                        {i < pairs.length - 1 && <BranchBottom />}
                      </Branch>
                      {name}
                    </NameLine>
                  </NameCell>
                  <Cell>No Group</Cell>
                  <Cell>Finished</Cell>
                  {values.map((v, k) => <Cell key={k} $align="right" $pad={k === 1 ? 1 : 3}>{v}</Cell>)}
                  <Cell />
                </PairRow>
              );
            })}
          </tbody>
        </PairTable>
        <ScrollTrack />
      </TablePane>

      <RowSplitter />

      <LowerPane>
        <ThroughputPlot />
        <ColumnSplitter />
        <LegendPane>
          <LegendBox>
            <LegendList>
              {traces.map((t) => <LegendItem key={t.name} $color={t.color}>{t.name}</LegendItem>)}
            </LegendList>
            <LegendScroll>
              <ScrollButton type="button" aria-label="Scroll left">
                <svg width="13" height="13" viewBox="0 0 13 13" aria-hidden="true"><path d="M8 3v8l-4-4z" fill="#808080" /></svg>
              </ScrollButton>
            </LegendScroll>
          </LegendBox>
        </LegendPane>
      </LowerPane>
    </Shell>
  );
}
